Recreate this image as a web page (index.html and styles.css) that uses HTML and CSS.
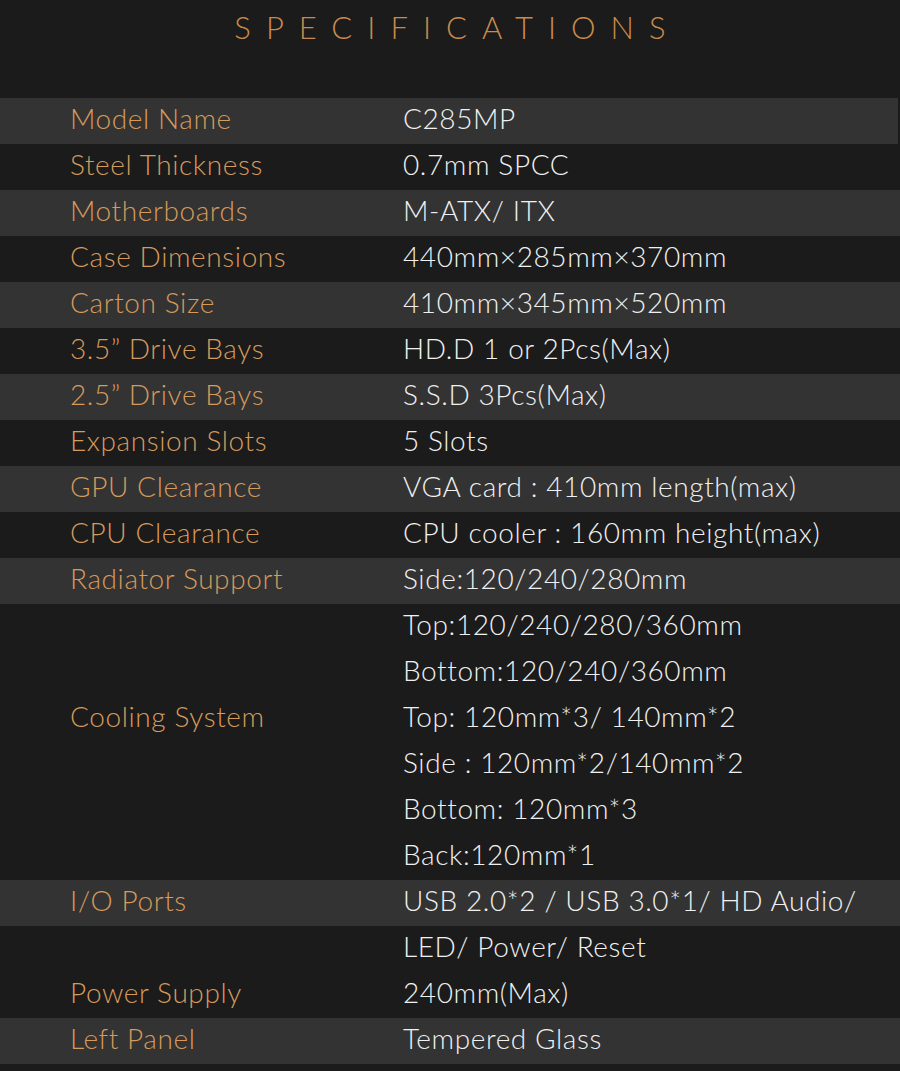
FILE: index.html
```html
<!DOCTYPE html>
<html lang="en">
<head>
<meta charset="utf-8">
<title>Specifications</title>
<link rel="stylesheet" href="styles.css">
</head>
<body>
<div class="page">
  <h1 class="title">SPECIFICATIONS</h1>
  <div class="specs">
    <div class="row stripe first"><div class="label t">Model Name</div><div class="value t">C285MP</div></div>
    <div class="row"><div class="label t">Steel Thickness</div><div class="value t">0.7mm SPCC</div></div>
    <div class="row stripe"><div class="label t">Motherboards</div><div class="value t">M-ATX/ ITX</div></div>
    <div class="row"><div class="label t">Case Dimensions</div><div class="value t">440mm×285mm×370mm</div></div>
    <div class="row stripe"><div class="label t">Carton Size</div><div class="value t">410mm×345mm×520mm</div></div>
    <div class="row"><div class="label t">3.5” Drive Bays</div><div class="value t">HD.D 1 or 2Pcs(Max)</div></div>
    <div class="row stripe"><div class="label t">2.5” Drive Bays</div><div class="value t">S.S.D 3Pcs(Max)</div></div>
    <div class="row"><div class="label t">Expansion Slots</div><div class="value t">5 Slots</div></div>
    <div class="row stripe"><div class="label t">GPU Clearance</div><div class="value t">VGA card : 410mm length(max)</div></div>
    <div class="row"><div class="label t">CPU Clearance</div><div class="value t">CPU cooler : 160mm height(max)</div></div>
    <div class="row stripe"><div class="label t">Radiator Support</div><div class="value t">Side:120/240/280mm</div></div>
    <div class="row multi cooling">
      <div class="label t">Cooling System</div>
      <div class="value">
        <div class="t">Top:120/240/280/360mm</div>
        <div class="t">Bottom:120/240/360mm</div>
        <div class="t">Top: 120mm*3/ 140mm*2</div>
        <div class="t">Side : 120mm*2/140mm*2</div>
        <div class="t">Bottom: 120mm*3</div>
        <div class="t">Back:120mm*1</div>
      </div>
    </div>
    <div class="row stripe"><div class="label t">I/O Ports</div><div class="value t">USB 2.0*2 / USB 3.0*1/ HD Audio/</div></div>
    <div class="row multi bottom">
      <div class="label t">Power Supply</div>
      <div class="value">
        <div class="t">LED/ Power/ Reset</div>
        <div class="t">240mm(Max)</div>
      </div>
    </div>
    <div class="row stripe"><div class="label t">Left Panel</div><div class="value t">Tempered Glass</div></div>
  </div>
</div>
</body>
</html>
```
FILE: styles.css
```css
html, body {
  margin: 0;
  padding: 0;
  background: #1b1b1b;
}
body {
  font-family: Lato, "Noto Sans", "Liberation Sans", sans-serif;
  width: 900px;
  height: 1071px;
  overflow: hidden;
}
.page {
  display: flex;
  flex-direction: column;
}
.title {
  margin: 0;
  height: 98px;
  box-sizing: border-box;
  padding-top: 9px;
  padding-left: 15px;
  text-align: center;
  font-weight: 300;
  font-size: 31px;
  line-height: 36px;
  letter-spacing: 15px;
  color: #c98b4d;
}
.specs {
  display: flex;
  flex-direction: column;
}
.row {
  display: grid;
  grid-template-columns: 333px 1fr;
  padding-left: 70px;
  align-items: center;
  font-size: 28px;
  font-weight: 300;
  letter-spacing: 0.6px;
  min-height: 46px;
}
.t {
  line-height: 40px;
  padding-bottom: 6px;
}
.row.stripe {
  background: #333333;
}
.row.first {
  margin-right: 2px;
}
.label {
  color: #d69a5b;
}
.value {
  color: #f0f0f0;
}
.row.cooling .label {
  align-self: start;
  padding-top: 92px;
}
.row.bottom .label {
  align-self: end;
}
```
